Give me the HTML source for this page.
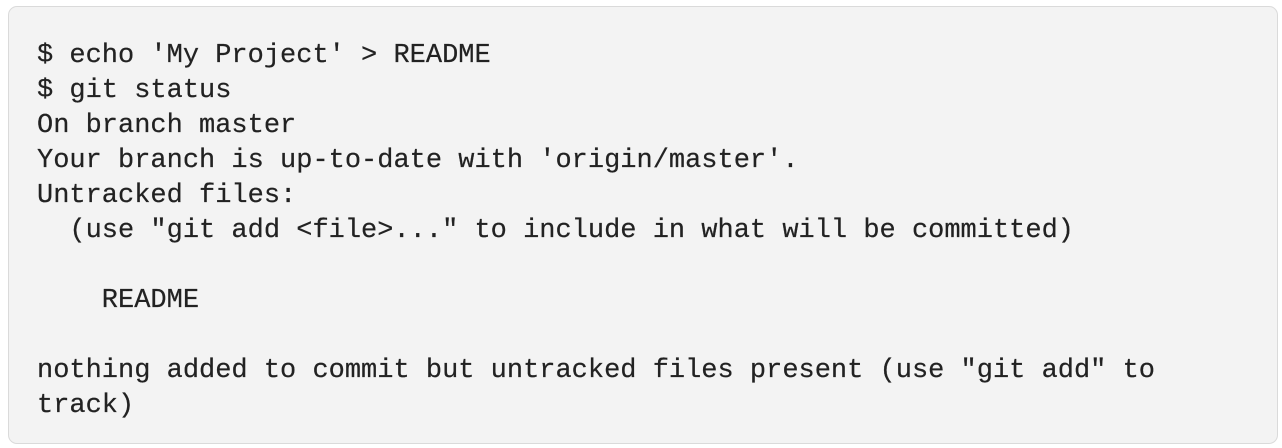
<!DOCTYPE html>
<html><head><style>
html,body{margin:0;padding:0;background:#fff;width:1282px;height:448px;overflow:hidden}
.box{position:absolute;left:8px;top:6px;width:1270px;height:438px;box-sizing:border-box;border:1.5px solid #dadada;border-radius:9px;background:#f3f3f3}
pre{position:absolute;left:37px;top:39px;margin:0;font-family:"Liberation Mono",monospace;font-size:27px;line-height:35px;color:#222;white-space:pre;-webkit-text-stroke:0.2px #222}
</style></head><body>
<div class="box"></div>
<pre>$ echo 'My Project' &gt; README
$ git status
On branch master
Your branch is up-to-date with 'origin/master'.
Untracked files:
  (use "git add &lt;file&gt;..." to include in what will be committed)

    README

nothing added to commit but untracked files present (use "git add" to
track)</pre>
</body></html>
